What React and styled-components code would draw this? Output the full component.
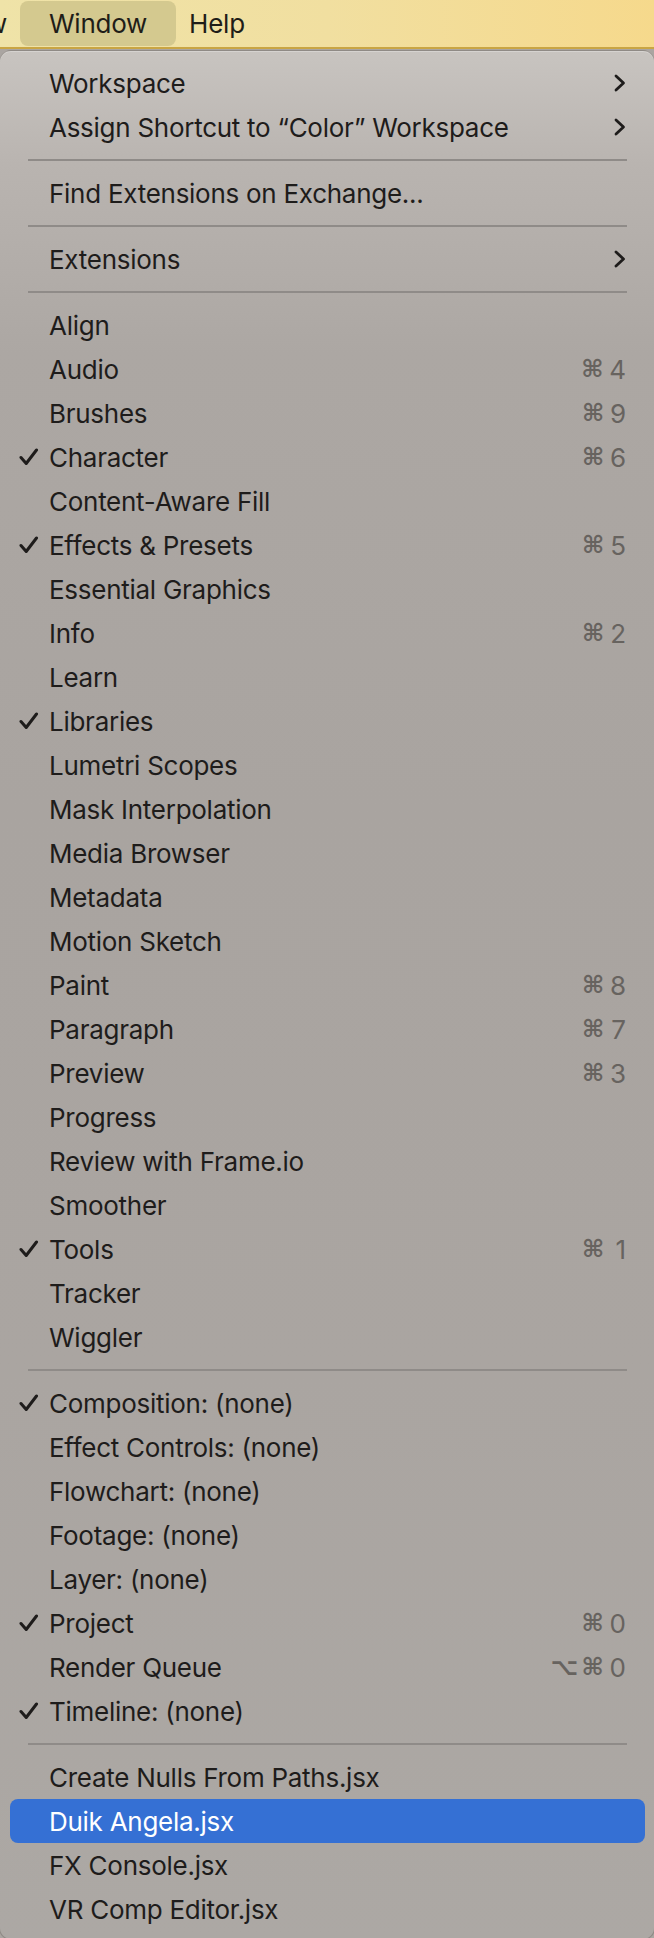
import React from "react";
import styled, { createGlobalStyle } from "styled-components";

const GlobalStyle = createGlobalStyle`
  html, body {
    margin: 0;
    padding: 0;
    background: #aaa5a1;
    overflow: hidden;
  }
  body {
    font-family: "Inter", "Noto Sans", "DejaVu Sans", sans-serif;
    -webkit-font-smoothing: antialiased;
  }
`;

const Screen = styled.div`
  width: 654px;
  height: 1938px;
  overflow: hidden;
  background: #aaa5a1;
`;

const MenuBar = styled.div`
  height: 47px;
  display: flex;
  align-items: stretch;
  background: linear-gradient(90deg, #efe3a8 0%, #f1dfa0 50%, #f6d98c 100%);
  border-bottom: 2px solid #c9a544;
`;

const ClippedTitle = styled.div`
  width: 28px;
  flex: none;
  display: flex;
  justify-content: flex-end;
  align-items: center;
  overflow: hidden;
  padding-right: 21px;
  box-sizing: border-box;
  white-space: nowrap;
  font-size: 26px;
  letter-spacing: -0.25px;
  color: #1f1d18;
`;

const Title = styled.div`
  display: flex;
  align-items: center;
  white-space: nowrap;
  font-size: 26px;
  letter-spacing: -0.25px;
  color: #1f1d18;
  padding: 0 ${(p) => (p.$active ? 29 : 21)}px;
  margin: ${(p) => (p.$active ? "1px -8px 1px" : "0")};
  border-radius: 8px;
  background: ${(p) => (p.$active ? "#d4c98f" : "transparent")};
`;

const Menu = styled.div`
  width: 656px;
  margin-top: 1px;
  margin-left: -1px;
  box-sizing: border-box;
  padding: 10px 0 8px;
  border: 1px solid rgba(90, 84, 78, 0.35);
  border-radius: 12px;
  background: linear-gradient(
    180deg,
    #c8c4c0 0%,
    #b9b4b0 6%,
    #aca7a3 16%,
    #a9a4a0 40%,
    #aaa5a1 70%,
    #aca8a4 100%
  );
  box-shadow: inset 0 1px 0 rgba(255, 255, 255, 0.25);
`;

const Row = styled.div`
  height: 44px;
  margin: 0 9px 0 10px;
  padding: 0 19px 0 9px;
  display: flex;
  align-items: center;
  border-radius: 8px;
  background: ${(p) => (p.$selected ? "#3570d4" : "transparent")};
  color: ${(p) => (p.$selected ? "#ffffff" : "#1e1c1b")};
`;

const CheckCol = styled.div`
  width: 30px;
  flex: none;
  display: flex;
  align-items: center;
`;

const Label = styled.div`
  flex: 1;
  font-size: 26px;
  white-space: nowrap;
  letter-spacing: -0.27px;
`;

const Shortcut = styled.div`
  display: flex;
  align-items: center;
  gap: 6px;
  color: ${(p) => (p.$selected ? "#ffffff" : "#67635f")};
  font-size: 26px;
`;

const Mod = styled.span`
  font-family: "DejaVu Sans", sans-serif;
  font-size: 24px;
  font-weight: bold;
  line-height: 1;
  width: 22px;
  text-align: center;
  margin-right: ${(p) => (p.$alt ? 3 : 0)}px;
`;

const Key = styled.span`
  font-family: "Inter", sans-serif;
  font-size: 26px;
  min-width: 16px;
  text-align: right;
`;

const Separator = styled.div`
  height: 22px;
  display: flex;
  align-items: center;
  padding: 0 27px 0 28px;
  &::after {
    content: "";
    flex: 1;
    height: 2px;
    background: #8f8b88;
  }
`;

const Check = () => (
  <svg width="20" height="18" viewBox="0 0 20 18">
    <path
      d="M2 9.5 L7.2 15.5 L17.5 2"
      fill="none"
      stroke="#1e1c1b"
      strokeWidth="3"
      strokeLinecap="round"
      strokeLinejoin="round"
    />
  </svg>
);

const Chevron = () => (
  <svg width="12" height="18" viewBox="0 0 12 18">
    <path
      d="M2 2 L9.5 9 L2 16"
      fill="none"
      stroke="#1e1c1b"
      strokeWidth="2.8"
      strokeLinecap="round"
      strokeLinejoin="round"
    />
  </svg>
);

const groups = [
  [
    { label: "Workspace", sub: true },
    { label: "Assign Shortcut to \u201CColor\u201D Workspace", sub: true },
  ],
  [{ label: "Find Extensions on Exchange..." }],
  [{ label: "Extensions", sub: true }],
  [
    { label: "Align" },
    { label: "Audio", key: "4" },
    { label: "Brushes", key: "9" },
    { label: "Character", key: "6", checked: true },
    { label: "Content-Aware Fill" },
    { label: "Effects & Presets", key: "5", checked: true },
    { label: "Essential Graphics" },
    { label: "Info", key: "2" },
    { label: "Learn" },
    { label: "Libraries", checked: true },
    { label: "Lumetri Scopes" },
    { label: "Mask Interpolation" },
    { label: "Media Browser" },
    { label: "Metadata" },
    { label: "Motion Sketch" },
    { label: "Paint", key: "8" },
    { label: "Paragraph", key: "7" },
    { label: "Preview", key: "3" },
    { label: "Progress" },
    { label: "Review with Frame.io" },
    { label: "Smoother" },
    { label: "Tools", key: "1", checked: true },
    { label: "Tracker" },
    { label: "Wiggler" },
  ],
  [
    { label: "Composition: (none)", checked: true },
    { label: "Effect Controls: (none)" },
    { label: "Flowchart: (none)" },
    { label: "Footage: (none)" },
    { label: "Layer: (none)" },
    { label: "Project", key: "0", checked: true },
    { label: "Render Queue", key: "0", alt: true },
    { label: "Timeline: (none)", checked: true },
  ],
  [
    { label: "Create Nulls From Paths.jsx" },
    { label: "Duik Angela.jsx", selected: true },
    { label: "FX Console.jsx" },
    { label: "VR Comp Editor.jsx" },
  ],
];

const MenuRow = ({ item }) => (
  <Row $selected={item.selected}>
    <CheckCol>{item.checked && <Check />}</CheckCol>
    <Label>{item.label}</Label>
    {item.key && (
      <Shortcut $selected={item.selected}>
        {item.alt && <Mod $alt>{"\u2325"}</Mod>}
        <Mod>{"\u2318"}</Mod>
        <Key>{item.key}</Key>
      </Shortcut>
    )}
    {item.sub && <Chevron />}
  </Row>
);

export default function App() {
  return (
    <Screen>
      <GlobalStyle />
      <MenuBar>
        <ClippedTitle>View</ClippedTitle>
        <Title $active>Window</Title>
        <Title>Help</Title>
      </MenuBar>
      <Menu>
        {groups.map((g, gi) => (
          <React.Fragment key={gi}>
            {gi > 0 && <Separator />}
            {g.map((item) => (
              <MenuRow key={item.label} item={item} />
            ))}
          </React.Fragment>
        ))}
      </Menu>
    </Screen>
  );
}
